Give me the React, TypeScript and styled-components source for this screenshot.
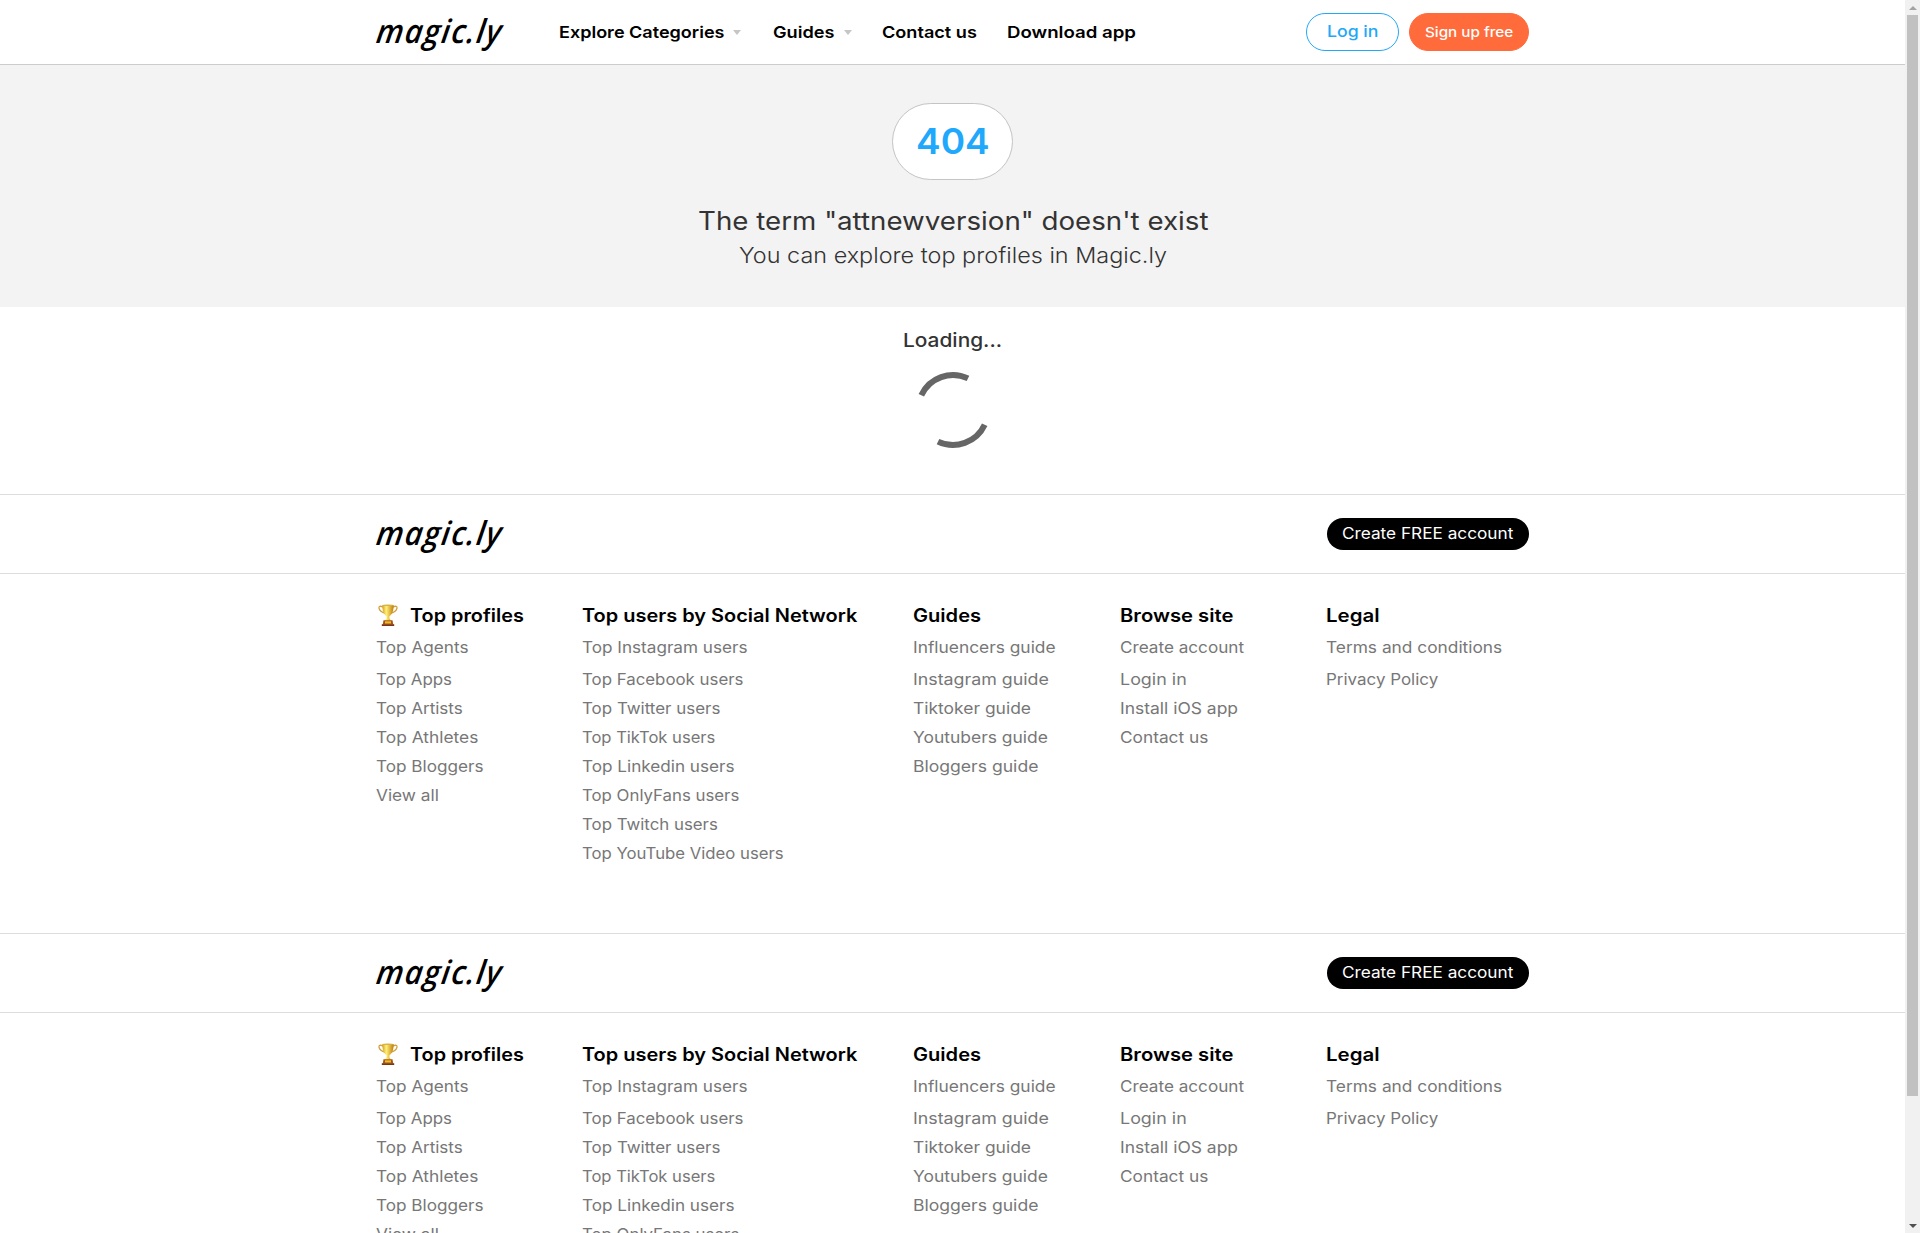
import React, { useLayoutEffect, useRef, useState } from "react";
import styled, { createGlobalStyle } from "styled-components";

const Global = createGlobalStyle`
  * { box-sizing: border-box; }
  html, body { margin: 0; padding: 0; background: #fff; overflow: hidden; }
  body { font-family: Inter, "Open Sans", sans-serif; color: #333; }
  h1, h2, h3, ul { margin: 0; padding: 0; font-weight: inherit; font-size: inherit; }
  ul { list-style: none; }
  a { color: inherit; text-decoration: none; }
`;

const FitBox = styled.span<{ $w: number }>`
  display: inline-block;
  width: ${(p) => p.$w}px;
  white-space: nowrap;
  flex: none;
  vertical-align: top;
  text-align: left;
`;
const FitInner = styled.span`
  display: inline-block;
  transform-origin: 0 50%;
`;

/* Stretches a label horizontally so that it fills a fixed measure. */
function Fit({ w, children }: { w: number; children: React.ReactNode }) {
  const ref = useRef<HTMLSpanElement>(null);
  const [scale, setScale] = useState(1);
  useLayoutEffect(() => {
    if (ref.current && ref.current.offsetWidth) setScale(w / ref.current.offsetWidth);
  }, [w]);
  return (
    <FitBox $w={w}>
      <FitInner ref={ref} style={{ transform: `scaleX(${scale})` }}>{children}</FitInner>
    </FitBox>
  );
}

const Screen = styled.div`
  display: flex;
  width: 1920px;
  height: 1233px;
  overflow: hidden;
`;
const Page = styled.div`
  width: 1905px;
  height: 1233px;
  overflow: hidden;
`;
const Container = styled.div`
  width: 1152px;
  height: 100%;
  margin: 0 auto;
  display: flex;
  align-items: center;
`;

const Header = styled.header`
  height: 65px;
  border-bottom: 1px solid #ccc;
`;
const LogoLink = styled.a`
  font: italic 600 33px/44px "Open Sans", "Noto Sans", sans-serif;
  letter-spacing: 1.5px;
  color: #000;
  width: 128px;
  padding-bottom: 2px;
`;
const Slant = styled.span`
  display: inline-block;
  transform: skewX(-8deg);
`;
const Nav = styled.nav`
  display: flex;
  flex: 1;
  margin-left: 54px;
  color: #000;
  font-size: 16.4px;
  font-weight: 600;
  line-height: 24px;
`;
const NavItem = styled.a<{ $gap: number }>`
  display: flex;
  align-items: center;
  margin-right: ${(p) => p.$gap}px;
`;
const Caret = styled.i`
  margin-left: 9px;
  margin-top: 1px;
  border: 4.5px solid transparent;
  border-top: 5px solid #c6c6c6;
  border-bottom: 0;
`;
const Actions = styled.div`
  display: flex;
  gap: 10px;
`;
const PillButton = styled.a<{ $solid?: boolean }>`
  display: flex;
  align-items: center;
  justify-content: center;
  height: 38px;
  width: ${(p) => (p.$solid ? 120 : 93)}px;
  padding-bottom: ${(p) => (p.$solid ? 0 : 2)}px;
  border-radius: 19px;
  border: 1px solid ${(p) => (p.$solid ? "#ff6b3a" : "#22a8f8")};
  background: ${(p) => (p.$solid ? "#ff6b3a" : "#fff")};
  color: ${(p) => (p.$solid ? "#fff" : "#22a8f8")};
  font-size: ${(p) => (p.$solid ? 13.5 : 15.6)}px;
  font-weight: 500;
`;

const Hero = styled.section`
  height: 242px;
  padding-top: 38px;
  background: #f3f3f3;
  display: flex;
  flex-direction: column;
  align-items: center;
`;
const Code = styled.div`
  width: 121px;
  height: 77px;
  border: 1px solid #c4c4c4;
  border-radius: 39px;
  background: #fff;
  color: #20a8fc;
  font-size: 35.5px;
  font-weight: 600;
  display: flex;
  align-items: center;
  justify-content: center;
`;
const Title = styled.h1`
  margin-top: 23px;
  font-size: 25px;
  font-weight: 400;
  line-height: 36px;
`;
const Subtitle = styled.h2`
  font-size: 22px;
  font-weight: 300;
  line-height: 32px;
`;

const Loading = styled.section`
  height: 187px;
  padding-top: 18px;
  display: flex;
  flex-direction: column;
  align-items: center;
  font-size: 19.2px;
  font-weight: 500;
  line-height: 30px;
`;
const Spinner = styled.svg`
  display: block;
  width: 80px;
  height: 80px;
  margin-top: 15px;
`;

const FooterBlock = styled.footer`
  height: 439px;
`;
const FooterBar = styled.div`
  height: 80px;
  border-top: 1px solid #ddd;
  border-bottom: 1px solid #ddd;
`;
const CreateButton = styled.a`
  margin-left: auto;
  width: 202px;
  height: 32px;
  border-radius: 16px;
  background: #000;
  color: #fff;
  font-size: 15.8px;
  display: flex;
  align-items: center;
  justify-content: center;
  padding-bottom: 1px;
`;
const Columns = styled.div`
  width: 1154px;
  margin: 0 auto;
  padding-top: 26px;
  display: grid;
  grid-template-columns: 206.5px 331px 206.5px 206.5px 1fr;
`;
const ColumnTitle = styled.h3`
  display: flex;
  height: 30px;
  margin-bottom: 3px;
  color: #000;
  font-size: 18.2px;
  font-weight: 600;
  line-height: 30px;
`;
const Trophy = styled.svg`
  width: 22px;
  height: 22px;
  margin: 4px 11px 0 1px;
`;
const Item = styled.li`
  height: 29px;
  line-height: 29px;
  font-size: 15.9px;
  color: #777;
  &:first-child { margin-bottom: 3px; }
`;

const ScrollTrack = styled.div`
  width: 15px;
  height: 1233px;
  background: #f1f1f1;
  display: flex;
  flex-direction: column;
  align-items: center;
`;
const Thumb = styled.div`
  width: 11px;
  height: 1081px;
  background: #c1c1c1;
`;
const ArrowSlot = styled.div<{ $down?: boolean }>`
  height: 15px;
  display: flex;
  align-items: center;
  margin-top: ${(p) => (p.$down ? "auto" : 0)};
  &::after {
    content: "";
    border: 4px solid transparent;
    border-${(p) => (p.$down ? "top" : "bottom")}-color: ${(p) => (p.$down ? "#505050" : "#a3a3a3")};
    border-${(p) => (p.$down ? "bottom" : "top")}-width: 0;
  }
`;

function Logo() {
  return (
    <LogoLink href="#"><Slant><Fit w={126.5}>magic.ly</Fit></Slant></LogoLink>
  );
}

function TrophyIcon() {
  return (
    <Trophy viewBox="0 0 22 22">
      <defs>
        <linearGradient id="cup" x1="0" x2="1">
          <stop offset="0" stopColor="#d9a014" />
          <stop offset=".35" stopColor="#fff07a" />
          <stop offset="1" stopColor="#c07c08" />
        </linearGradient>
      </defs>
      <path d="M6 3C3 1.6 1.6 2.2 2 4.2c.5 2.6 3 4.3 6.500 5.2M16 3c3-1.4 4.4-.8 4 1.2-.5 2.6-3 4.3-6.500 5.2" fill="none" stroke="#cfa03c" strokeWidth="1.3" />
      <path d="M5.3 1h11.4c0 6-1.6 9.5-4.3 11.3v1.6c.2 1.3 1 2 2.100 2.600h-7c1.100-.6 1.900-1.300 2.100-2.600v-1.600C6.900 10.500 5.300 7 5.300 1z" fill="url(#cup)" />
      <ellipse cx="11" cy="1.3" rx="5.7" ry=".8" fill="#d5b346" />
      <path d="M6.5 16.3h9l.7 4.200H5.800z" fill="#a4570d" />
      <path d="M8 17.3h6v2.200H8z" fill="#efb92c" />
      <path d="M4.800 20.200h12.400V22H4.800z" fill="#7c3510" />
    </Trophy>
  );
}

type Entry = [string, number];
const columns: { title: Entry; trophy?: boolean; items: Entry[] }[] = [
  {
    title: ["Top profiles", 113.5],
    trophy: true,
    items: [["Top Agents", 93], ["Top Apps", 76.5], ["Top Artists", 87], ["Top Athletes", 102.5], ["Top Bloggers", 108], ["View all", 63]],
  },
  {
    title: ["Top users by Social Network", 275.5],
    items: [["Top Instagram users", 165], ["Top Facebook users", 161], ["Top Twitter users", 138.5], ["Top TikTok users", 133.5], ["Top Linkedin users", 152], ["Top OnlyFans users", 157.5], ["Top Twitch users", 135.5], ["Top YouTube Video users", 202]],
  },
  {
    title: ["Guides", 68.5],
    items: [["Influencers guide", 143], ["Instagram guide", 135.5], ["Tiktoker guide", 117.5], ["Youtubers guide", 135], ["Bloggers guide", 125]],
  },
  {
    title: ["Browse site", 113.5],
    items: [["Create account", 124], ["Login in", 66.5], ["Install iOS app", 117.5], ["Contact us", 88]],
  },
  {
    title: ["Legal", 54],
    items: [["Terms and conditions", 176.5], ["Privacy Policy", 112]],
  },
];

function Footer() {
  return (
    <FooterBlock>
      <FooterBar>
        <Container>
          <Logo />
          <CreateButton href="#"><Fit w={171}>Create FREE account</Fit></CreateButton>
        </Container>
      </FooterBar>
      <Columns>
        {columns.map((c) => (
          <div key={c.title[0]}>
            <ColumnTitle>
              {c.trophy && <TrophyIcon />}
              <Fit w={c.title[1]}>{c.title[0]}</Fit>
            </ColumnTitle>
            <ul>
              {c.items.map(([label, w]) => (
                <Item key={label}><a href="#"><Fit w={w}>{label}</Fit></a></Item>
              ))}
            </ul>
          </div>
        ))}
      </Columns>
    </FooterBlock>
  );
}

export default function App() {
  return (
    <Screen>
      <Global />
      <Page>
        <Header>
          <Container>
            <Logo />
            <Nav>
              <NavItem href="#" $gap={32}><Fit w={165}>Explore Categories</Fit><Caret /></NavItem>
              <NavItem href="#" $gap={30.5}><Fit w={62}>Guides</Fit><Caret /></NavItem>
              <NavItem href="#" $gap={30}><Fit w={95}>Contact us</Fit></NavItem>
              <NavItem href="#" $gap={0}><Fit w={128.5}>Download app</Fit></NavItem>
            </Nav>
            <Actions>
              <PillButton href="#"><Fit w={51}>Log in</Fit></PillButton>
              <PillButton href="#" $solid><Fit w={88}>Sign up free</Fit></PillButton>
            </Actions>
          </Container>
        </Header>
        <Hero>
          <Code><Fit w={74}>404</Fit></Code>
          <Title><Fit w={510}>The term "attnewversion" doesn't exist</Fit></Title>
          <Subtitle><Fit w={428}>You can explore top profiles in Magic.ly</Fit></Subtitle>
        </Hero>
        <Loading>
          <Fit w={99}>Loading...</Fit>
          <Spinner viewBox="-40 -40 80 80">
            <path d="M-31.7-14.8A35 35 0 0 1 15-31.6M31.7 14.8A35 35 0 0 1-15 31.6" fill="none" stroke="#666" strokeWidth="6" />
          </Spinner>
        </Loading>
        <Footer />
        <Footer />
      </Page>
      <ScrollTrack>
        <ArrowSlot />
        <Thumb />
        <ArrowSlot $down />
      </ScrollTrack>
    </Screen>
  );
}
